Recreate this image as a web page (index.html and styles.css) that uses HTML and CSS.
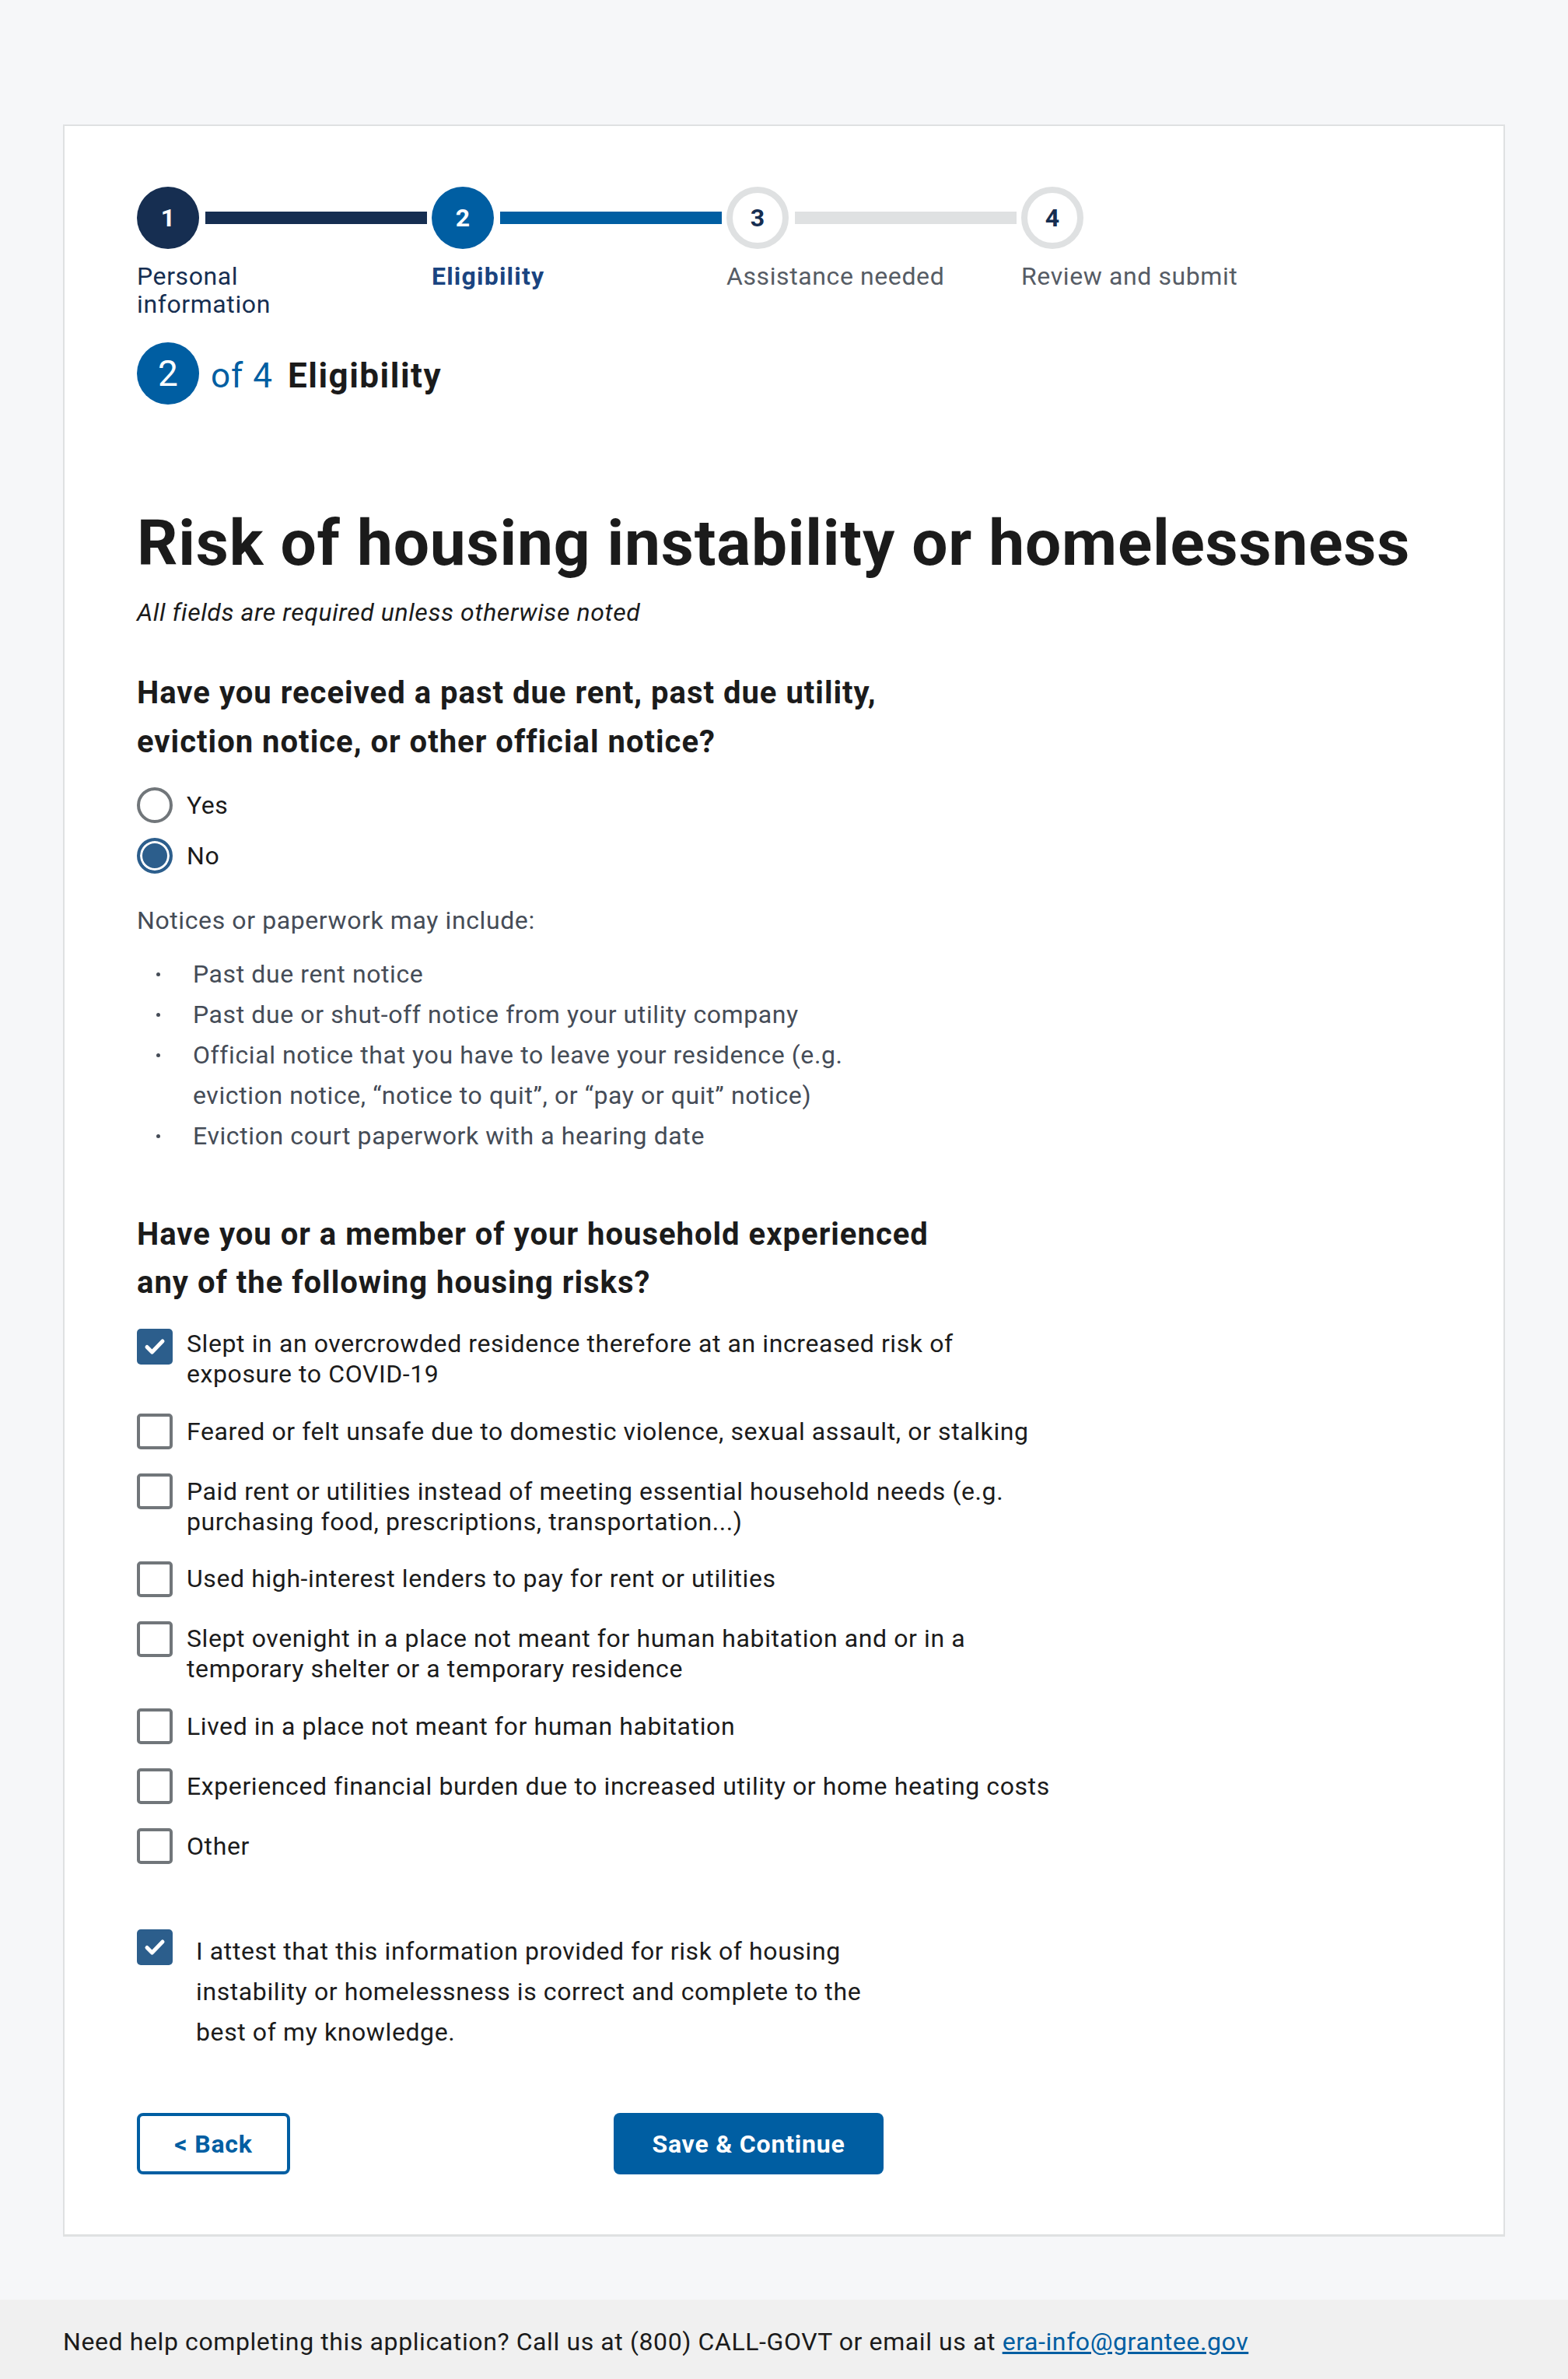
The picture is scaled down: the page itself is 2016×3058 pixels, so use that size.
FILE: index.html
```html
<!DOCTYPE html>
<html lang="en">
<head>
<meta charset="utf-8">
<title>Risk of housing instability or homelessness</title>
<link rel="stylesheet" href="styles.css">
</head>
<body>
<div class="page">
  <main class="card">
    <ol class="steps">
      <li class="step step--done">
        <div class="step-track"><span class="step-num">1</span><span class="step-line"></span></div>
        <span class="step-label">Personal information</span>
      </li>
      <li class="step step--current">
        <div class="step-track"><span class="step-num">2</span><span class="step-line"></span></div>
        <span class="step-label">Eligibility</span>
      </li>
      <li class="step step--todo">
        <div class="step-track"><span class="step-num">3</span><span class="step-line"></span></div>
        <span class="step-label">Assistance needed</span>
      </li>
      <li class="step step--todo step--last">
        <div class="step-track"><span class="step-num">4</span></div>
        <span class="step-label">Review and submit</span>
      </li>
    </ol>

    <div class="step-heading">
      <span class="step-heading-num">2</span>
      <span class="step-heading-of">of 4</span>
      <span class="step-heading-title">Eligibility</span>
    </div>

    <h1 class="page-title">Risk of housing instability or homelessness</h1>
    <p class="required-note">All fields are required unless otherwise noted</p>

    <h2 class="question question--first">Have you received a past due rent, past due utility, eviction notice, or other official notice?</h2>
    <div class="radio-group">
      <label class="radio-row"><span class="radio"></span><span class="radio-text">Yes</span></label>
      <label class="radio-row"><span class="radio radio--checked"></span><span class="radio-text">No</span></label>
    </div>

    <p class="hint">Notices or paperwork may include:</p>
    <ul class="notice-list">
      <li>Past due rent notice</li>
      <li>Past due or shut-off notice from your utility company</li>
      <li>Official notice that you have to leave your residence (e.g. eviction notice, “notice to quit”, or “pay or quit” notice)</li>
      <li>Eviction court paperwork with a hearing date</li>
    </ul>

    <h2 class="question question--second">Have you or a member of your household experienced any of the following housing risks?</h2>
    <div class="check-group">
      <label class="check-row"><span class="checkbox checkbox--checked"><svg viewBox="0 0 46 46" width="46" height="46"><path d="M13 23.5l6.5 6.5 13.5-14" fill="none" stroke="#fff" stroke-width="5" stroke-linecap="round" stroke-linejoin="round"/></svg></span><span class="check-text">Slept in an overcrowded residence therefore at an increased risk of<br>exposure to COVID-19</span></label>
      <label class="check-row"><span class="checkbox"></span><span class="check-text">Feared or felt unsafe due to domestic violence, sexual assault, or stalking</span></label>
      <label class="check-row"><span class="checkbox"></span><span class="check-text">Paid rent or utilities instead of meeting essential household needs (e.g. purchasing food, prescriptions, transportation...)</span></label>
      <label class="check-row"><span class="checkbox"></span><span class="check-text">Used high-interest lenders to pay for rent or utilities</span></label>
      <label class="check-row"><span class="checkbox"></span><span class="check-text">Slept ovenight in a place not meant for human habitation and or in a temporary shelter or a temporary residence</span></label>
      <label class="check-row"><span class="checkbox"></span><span class="check-text">Lived in a place not meant for human habitation</span></label>
      <label class="check-row"><span class="checkbox"></span><span class="check-text">Experienced financial burden due to increased utility or home heating costs</span></label>
      <label class="check-row"><span class="checkbox"></span><span class="check-text">Other</span></label>
    </div>

    <label class="attest">
      <span class="checkbox checkbox--checked"><svg viewBox="0 0 46 46" width="46" height="46"><path d="M13 23.5l6.5 6.5 13.5-14" fill="none" stroke="#fff" stroke-width="5" stroke-linecap="round" stroke-linejoin="round"/></svg></span>
      <span class="attest-text">I attest that this information provided for risk of housing instability or homelessness is correct and complete to the best of my knowledge.</span>
    </label>

    <div class="actions">
      <button class="btn btn--outline" type="button">&lt; Back</button>
      <button class="btn btn--primary" type="button">Save &amp; Continue</button>
    </div>
  </main>
</div>
<footer class="site-footer">
  Need help completing this application? Call us at (800) CALL-GOVT or email us at <a href="#">era-info@grantee.gov</a>
</footer>
</body>
</html>
```

FILE: styles.css
```css
* { box-sizing: border-box; }

html, body {
  margin: 0;
  padding: 0;
}

body {
  background: #f6f7f9;
  font-family: Roboto, "Liberation Sans", Arial, sans-serif;
  color: #1b1b1b;
  letter-spacing: 0.6px;
}

.page {
  padding: 160px 81px 81px;
}

.card {
  display: block;
  background: #fff;
  border: 2px solid #dfe1e2;
  border-bottom-width: 3px;
  padding: 78px 93px 77px;
}

/* Step indicator */
.steps {
  display: flex;
  list-style: none;
  margin: 0;
  padding: 0;
}

.step {
  width: 379px;
  flex: none;
}

.step-track {
  display: flex;
  align-items: center;
  height: 80px;
}

.step-num {
  width: 80px;
  height: 80px;
  flex: none;
  border-radius: 50%;
  display: flex;
  align-items: center;
  justify-content: center;
  font-size: 32px;
  font-weight: 700;
  letter-spacing: 0;
}

.step-line {
  flex: 1;
  height: 16px;
  margin: 0 6px 0 8px;
}

.step-label {
  display: block;
  margin-top: 17px;
  max-width: 292px;
  font-size: 32px;
  line-height: 36px;
}

.step--done .step-num { background: #162e51; color: #fff; }
.step--done .step-line { background: #162e51; }
.step--done .step-label { color: #162e51; }

.step--current .step-num { background: #005ea2; color: #fff; }
.step--current .step-line { background: #005ea2; }
.step--current .step-label { color: #1a4480; font-weight: 700; letter-spacing: 1.2px; }

.step--todo .step-num { background: #fff; border: 8px solid #dfe1e2; color: #162e51; }
.step--todo .step-line { background: #dfe1e2; }
.step--todo .step-label { color: #565c65; }

.step-heading {
  display: flex;
  align-items: center;
  margin-top: 31px;
  height: 80px;
}

.step-heading-num {
  width: 80px;
  height: 80px;
  border-radius: 50%;
  background: #005ea2;
  color: #fff;
  display: flex;
  align-items: center;
  justify-content: center;
  font-size: 46px;
  letter-spacing: 0;
}

.step-heading-of {
  margin-left: 15px;
  padding-top: 6px;
  color: #005ea2;
  font-size: 44px;
  letter-spacing: 1px;
}

.step-heading-title {
  margin-left: 19px;
  padding-top: 6px;
  font-size: 44px;
  font-weight: 700;
  letter-spacing: 1.5px;
}

/* Headings & text */
.page-title {
  margin: 130px 0 0;
  font-size: 82px;
  line-height: 96px;
  font-weight: 700;
  letter-spacing: 0.8px;
}

.required-note {
  margin: 21px 0 0;
  font-style: italic;
  font-size: 32px;
  line-height: 40px;
}

.question {
  margin: 0;
  max-width: 1050px;
  font-size: 40px;
  font-weight: 700;
  letter-spacing: 1px;
}

.question--first {
  margin-top: 52px;
  line-height: 63px;
}

.question--second {
  margin-top: 70px;
  line-height: 62px;
}

/* Radios */
.radio-group {
  display: flex;
  flex-direction: column;
  gap: 19px;
  margin-top: 27px;
}

.radio-row {
  display: flex;
  align-items: center;
  height: 46px;
}

.radio {
  width: 46px;
  height: 46px;
  flex: none;
  border-radius: 50%;
  border: 4px solid #71767a;
  background: #fff;
}

.radio--checked {
  border-color: #2c5e8c;
  background: #2c5e8c;
  box-shadow: inset 0 0 0 3px #fff;
}

.radio-text {
  margin-left: 18px;
  font-size: 32px;
}

/* Hint list */
.hint {
  margin: 40px 0 0;
  color: #454c57;
  font-size: 32px;
  line-height: 40px;
}

.notice-list {
  list-style: none;
  margin: 23px 0 0;
  padding: 0;
  max-width: 980px;
}

.notice-list li {
  display: flex;
  color: #454c57;
  font-size: 32px;
  line-height: 52px;
}

.notice-list li::before {
  content: "";
  flex: none;
  align-self: flex-start;
  width: 5px;
  height: 5px;
  margin: 24px 42px 0 25px;
  border-radius: 50%;
  background: #454c57;
}

/* Checkboxes */
.check-group {
  display: flex;
  flex-direction: column;
  gap: 31px;
  margin-top: 28px;
}

.check-row {
  display: flex;
  align-items: flex-start;
}

.checkbox {
  width: 46px;
  height: 46px;
  flex: none;
  border: 4px solid #71767a;
  border-radius: 5px;
  background: #fff;
}

.checkbox--checked {
  border: none;
  background: #2c5e8c;
}

.checkbox svg {
  display: block;
}

.check-text {
  display: block;
  min-height: 46px;
  padding-top: 3.5px;
  max-width: 1135px;
  margin-left: 18px;
  font-size: 32px;
  line-height: 39px;
}

.check-text:has(br) {
  padding-top: 0;
}

.attest {
  display: flex;
  align-items: flex-start;
  margin-top: 84px;
  width: 960px;
}

.attest-text {
  margin-left: 30px;
  padding-top: 2px;
  font-size: 32px;
  line-height: 52px;
}

/* Buttons */
.actions {
  display: flex;
  justify-content: space-between;
  width: 960px;
  margin-top: 78px;
}

.btn {
  height: 79px;
  border-radius: 8px;
  font-family: Roboto, "Liberation Sans", Arial, sans-serif;
  font-size: 32px;
  font-weight: 700;
  letter-spacing: 0.8px;
  cursor: pointer;
}

.btn--outline {
  width: 197px;
  background: #fff;
  border: 4px solid #005ea2;
  color: #005ea2;
}

.btn--primary {
  width: 347px;
  background: #005ea2;
  border: none;
  color: #fff;
}

/* Footer */
.site-footer {
  background: #f0f0f0;
  padding: 34px 81px 40px;
  font-size: 32px;
  line-height: 40px;
  color: #1b1b1b;
}

.site-footer a {
  color: #005ea2;
  text-decoration: underline;
}
```
